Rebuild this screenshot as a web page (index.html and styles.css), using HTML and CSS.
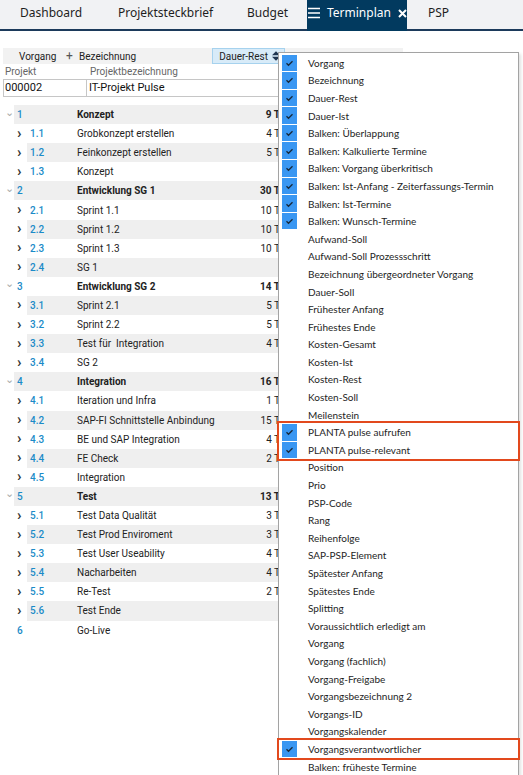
FILE: index.html
```html
<!DOCTYPE html>
<html lang="de">
<head>
    <meta charset="UTF-8">
    <title>Terminplan</title>
    <link rel="stylesheet" href="styles.css">
</head>
<body>

    <div class="tabs">
        <div class="tab t1">Dashboard</div>
        <div class="tab t2">Projektsteckbrief</div>
        <div class="tab t3">Budget</div>
        <div class="tab active">
            <svg class="burger" width="13" height="12" viewBox="0 0 13 12"><path d="M0 1.5h12M0 6h12M0 10.5h12" stroke="#fff" stroke-width="1.4"/></svg>
            <span>Terminplan</span>
            <svg class="close" width="9" height="9" viewBox="0 0 9 9"><path d="M1 1l7 7M8 1l-7 7" stroke="#fff" stroke-width="2"/></svg>
        </div>
        <div class="tab t5">PSP</div>
    </div>

    <div class="cols">
        <span class="col-vorgang">Vorgang</span>
        <span class="col-plus">+</span>
        <span class="col-bez">Bezeichnung</span>
        <span class="col-dauer">Dauer-Rest
            <svg width="8" height="10" viewBox="0 0 8 10"><path d="M0 4.3L4 0.3 8 4.3zM0 5.7L4 9.7 8 5.7z" fill="#1f3550"/></svg>
        </span>
    </div>

    <div class="labels">
        <span class="lab-projekt">Projekt</span>
        <span>Projektbezeichnung</span>
    </div>
    <div class="fields">
        <div class="field f-id">000002</div>
        <div class="field f-name">IT-Projekt Pulse</div>
    </div>

    <div class="plan">
        <div class="row group even"><span class="tog">&#8964;</span><div class="band"><span class="num">1</span><span class="name">Konzept</span><span class="dur">9 T</span></div></div>
        <div class="row child"><span class="tog">&#8250;</span><div class="band"><span class="num">1.1</span><span class="name">Grobkonzept erstellen</span><span class="dur">4 T</span></div></div>
        <div class="row child even"><span class="tog">&#8250;</span><div class="band"><span class="num">1.2</span><span class="name">Feinkonzept erstellen</span><span class="dur">5 T</span></div></div>
        <div class="row child"><span class="tog">&#8250;</span><div class="band"><span class="num">1.3</span><span class="name">Konzept</span><span class="dur"></span></div></div>
        <div class="row group even"><span class="tog">&#8964;</span><div class="band"><span class="num">2</span><span class="name">Entwicklung SG 1</span><span class="dur">30 T</span></div></div>
        <div class="row child"><span class="tog">&#8250;</span><div class="band"><span class="num">2.1</span><span class="name">Sprint 1.1</span><span class="dur">10 T</span></div></div>
        <div class="row child even"><span class="tog">&#8250;</span><div class="band"><span class="num">2.2</span><span class="name">Sprint 1.2</span><span class="dur">10 T</span></div></div>
        <div class="row child"><span class="tog">&#8250;</span><div class="band"><span class="num">2.3</span><span class="name">Sprint 1.3</span><span class="dur">10 T</span></div></div>
        <div class="row child even"><span class="tog">&#8250;</span><div class="band"><span class="num">2.4</span><span class="name">SG 1</span><span class="dur"></span></div></div>
        <div class="row group"><span class="tog">&#8964;</span><div class="band"><span class="num">3</span><span class="name">Entwicklung SG 2</span><span class="dur">14 T</span></div></div>
        <div class="row child even"><span class="tog">&#8250;</span><div class="band"><span class="num">3.1</span><span class="name">Sprint 2.1</span><span class="dur">5 T</span></div></div>
        <div class="row child"><span class="tog">&#8250;</span><div class="band"><span class="num">3.2</span><span class="name">Sprint 2.2</span><span class="dur">5 T</span></div></div>
        <div class="row child even"><span class="tog">&#8250;</span><div class="band"><span class="num">3.3</span><span class="name">Test für&nbsp; Integration</span><span class="dur">4 T</span></div></div>
        <div class="row child"><span class="tog">&#8250;</span><div class="band"><span class="num">3.4</span><span class="name">SG 2</span><span class="dur"></span></div></div>
        <div class="row group even"><span class="tog">&#8964;</span><div class="band"><span class="num">4</span><span class="name">Integration</span><span class="dur">16 T</span></div></div>
        <div class="row child"><span class="tog">&#8250;</span><div class="band"><span class="num">4.1</span><span class="name">Iteration und Infra</span><span class="dur">1 T</span></div></div>
        <div class="row child even"><span class="tog">&#8250;</span><div class="band"><span class="num">4.2</span><span class="name">SAP-FI Schnittstelle Anbindung</span><span class="dur">15 T</span></div></div>
        <div class="row child"><span class="tog">&#8250;</span><div class="band"><span class="num">4.3</span><span class="name">BE und SAP Integration</span><span class="dur">4 T</span></div></div>
        <div class="row child even"><span class="tog">&#8250;</span><div class="band"><span class="num">4.4</span><span class="name">FE Check</span><span class="dur">2 T</span></div></div>
        <div class="row child"><span class="tog">&#8250;</span><div class="band"><span class="num">4.5</span><span class="name">Integration</span><span class="dur"></span></div></div>
        <div class="row group even"><span class="tog">&#8964;</span><div class="band"><span class="num">5</span><span class="name">Test</span><span class="dur">13 T</span></div></div>
        <div class="row child"><span class="tog">&#8250;</span><div class="band"><span class="num">5.1</span><span class="name">Test Data Qualität</span><span class="dur">3 T</span></div></div>
        <div class="row child even"><span class="tog">&#8250;</span><div class="band"><span class="num">5.2</span><span class="name">Test Prod Enviroment</span><span class="dur">3 T</span></div></div>
        <div class="row child"><span class="tog">&#8250;</span><div class="band"><span class="num">5.3</span><span class="name">Test User Useability</span><span class="dur">4 T</span></div></div>
        <div class="row child even"><span class="tog">&#8250;</span><div class="band"><span class="num">5.4</span><span class="name">Nacharbeiten</span><span class="dur">4 T</span></div></div>
        <div class="row child"><span class="tog">&#8250;</span><div class="band"><span class="num">5.5</span><span class="name">Re-Test</span><span class="dur">2 T</span></div></div>
        <div class="row child even"><span class="tog">&#8250;</span><div class="band"><span class="num">5.6</span><span class="name">Test Ende</span><span class="dur"></span></div></div>
        <div class="row leaf"><span class="tog"></span><div class="band"><span class="num">6</span><span class="name">Go-Live</span><span class="dur"></span></div></div>
    </div>

    <!-- column chooser -->
    <div class="menu">
        <div class="item on"><span class="chk"></span>Vorgang</div>
        <div class="item on"><span class="chk"></span>Bezeichnung</div>
        <div class="item on"><span class="chk"></span>Dauer-Rest</div>
        <div class="item on"><span class="chk"></span>Dauer-Ist</div>
        <div class="item on"><span class="chk"></span>Balken: Überlappung</div>
        <div class="item on"><span class="chk"></span>Balken: Kalkulierte Termine</div>
        <div class="item on"><span class="chk"></span>Balken: Vorgang überkritisch</div>
        <div class="item on"><span class="chk"></span>Balken: Ist-Anfang - Zeiterfassungs-Termin</div>
        <div class="item on"><span class="chk"></span>Balken: Ist-Termine</div>
        <div class="item on"><span class="chk"></span>Balken: Wunsch-Termine</div>
        <div class="item"><span class="chk"></span>Aufwand-Soll</div>
        <div class="item"><span class="chk"></span>Aufwand-Soll Prozessschritt</div>
        <div class="item"><span class="chk"></span>Bezeichnung übergeordneter Vorgang</div>
        <div class="item"><span class="chk"></span>Dauer-Soll</div>
        <div class="item"><span class="chk"></span>Frühester Anfang</div>
        <div class="item"><span class="chk"></span>Frühestes Ende</div>
        <div class="item"><span class="chk"></span>Kosten-Gesamt</div>
        <div class="item"><span class="chk"></span>Kosten-Ist</div>
        <div class="item"><span class="chk"></span>Kosten-Rest</div>
        <div class="item"><span class="chk"></span>Kosten-Soll</div>
        <div class="item"><span class="chk"></span>Meilenstein</div>
        <div class="mark">
            <div class="item on"><span class="chk"></span>PLANTA pulse aufrufen</div>
            <div class="item on"><span class="chk"></span>PLANTA pulse-relevant</div>
        </div>
        <div class="item"><span class="chk"></span>Position</div>
        <div class="item"><span class="chk"></span>Prio</div>
        <div class="item"><span class="chk"></span>PSP-Code</div>
        <div class="item"><span class="chk"></span>Rang</div>
        <div class="item"><span class="chk"></span>Reihenfolge</div>
        <div class="item"><span class="chk"></span>SAP-PSP-Element</div>
        <div class="item"><span class="chk"></span>Spätester Anfang</div>
        <div class="item"><span class="chk"></span>Spätestes Ende</div>
        <div class="item"><span class="chk"></span>Splitting</div>
        <div class="item"><span class="chk"></span>Voraussichtlich erledigt am</div>
        <div class="item"><span class="chk"></span>Vorgang</div>
        <div class="item"><span class="chk"></span>Vorgang (fachlich)</div>
        <div class="item"><span class="chk"></span>Vorgang-Freigabe</div>
        <div class="item"><span class="chk"></span>Vorgangsbezeichnung 2</div>
        <div class="item"><span class="chk"></span>Vorgangs-ID</div>
        <div class="item"><span class="chk"></span>Vorgangskalender</div>
        <div class="mark">
            <div class="item on"><span class="chk"></span>Vorgangsverantwortlicher</div>
        </div>
        <div class="item"><span class="chk"></span>Balken: früheste Termine</div>
    </div>

</body>
</html>
```

FILE: styles.css
```css
body {
    margin: 0;
    width: 523px;
    height: 775px;
    overflow: hidden;
    position: relative;
    background: #fff;
    font-family: Roboto, "Liberation Sans", sans-serif;
    font-size: 10px;
    color: #222;
}

/* tab bar */
.tabs {
    display: flex;
    height: 29px;
    background: #f1f2f4;
    border-bottom: 2px solid #1c3a5b;
    font-family: "Noto Sans", sans-serif;
    font-size: 12px;
    color: #1e1e1e;
}

.tab {
    padding-left: 20px;
    line-height: 25px;
    box-sizing: border-box;
}

.t1 { width: 98px; }
.t2 { width: 129px; }
.t3 { width: 80px; }
.t5 { padding-left: 21px; }

.tab.active {
    width: 100px;
    height: 31px;
    padding-left: 1px;
    background: #023a5f;
    color: #fff;
    display: flex;
    align-items: flex-start;
}

.tab.active .burger {
    flex-shrink: 0;
    margin-top: 7px;
    margin-right: 6px;
}

.tab.active .close {
    flex-shrink: 0;
    margin-top: 9px;
    margin-left: 7px;
}

/* column header */
.cols {
    margin: 17px 0 0 3px;
    width: 400px;
    height: 16px;
    background: #f2f2f2;
    display: flex;
    align-items: center;
    color: #222;
}

.col-vorgang { margin-left: 16px; width: 47px; }
.col-plus { width: 13px; color: #555; font-size: 12px; }
.col-bez { width: 134px; }

.col-dauer {
    height: 14px;
    width: 67px;
    background: #d8ebf8;
    border: 1px solid #a6d2ee;
    display: flex;
    align-items: center;
    justify-content: flex-end;
    gap: 4px;
    padding-right: 4px;
    box-sizing: content-box;
    margin-left: -1px;
}

.labels {
    display: flex;
    height: 15px;
    align-items: center;
    color: #666;
    font-size: 10px;
}

.lab-projekt { margin-left: 5px; width: 85px; }

.fields {
    display: flex;
    margin-left: 3px;
    height: 18px;
}

.field {
    border: 1px solid #c6c6c6;
    box-sizing: border-box;
    font-size: 11px;
    line-height: 16px;
    padding-left: 1px;
    color: #111;
}

.f-id { width: 84px; }
.f-name { width: 320px; border-left: none; padding-left: 2px; }

/* plan table */
.plan {
    margin-top: 8px;
}

.row {
    display: flex;
    height: 19.1px;
    width: 400px;
}

.tog {
    box-sizing: border-box;
    flex-shrink: 0;
    display: flex;
    align-items: center;
}

.group .tog, .leaf .tog {
    width: 14px;
    padding-left: 5px;
    color: #aaa;
    font-size: 11px;
    padding-bottom: 5px;
}

.child .tog {
    width: 27px;
    padding-left: 17px;
    color: #333;
    font-size: 15px;
    font-weight: bold;
    padding-bottom: 2px;
}

.band {
    flex: 1;
    display: flex;
    align-items: center;
}

.row.even .band {
    background: #efefef;
}

.num {
    color: #1b8bc8;
    font-weight: 500;
    padding-left: 3px;
    box-sizing: border-box;
}

.group .num, .leaf .num { width: 63px; }
.child .num { width: 50px; }

.name { flex: 1; }

.dur {
    width: 40px;
    text-align: right;
    margin-right: 120px;
}

.group .name, .group .dur { font-weight: bold; }

/* column chooser menu */
.menu {
    position: absolute;
    left: 278px;
    top: 52px;
    width: 241px;
    height: 760px;
    box-sizing: border-box;
    padding: 1px 0 0 0;
    background: #fff;
    border: 1px solid #a3a3a3;
    box-shadow: 2px 2px 3px rgba(0, 0, 0, 0.12);
    font-family: Lato, sans-serif;
    font-size: 10px;
    color: #1e1e1e;
}

.item {
    height: 17.6px;
    display: flex;
    align-items: center;
}

.chk {
    width: 15px;
    height: 16.6px;
    margin-left: 3px;
    margin-right: 11px;
    flex-shrink: 0;
}

.item.on .chk {
    background: #3a97f2 url("data:image/svg+xml,%3Csvg xmlns='http://www.w3.org/2000/svg' width='15' height='16'%3E%3Cpath d='M4.5 8.3l2 2 4-4' fill='none' stroke='%23182838' stroke-width='1.3'/%3E%3C/svg%3E") center no-repeat;
}

.mark {
    outline: 2px solid #e2491d;
    outline-offset: 0;
}
```
